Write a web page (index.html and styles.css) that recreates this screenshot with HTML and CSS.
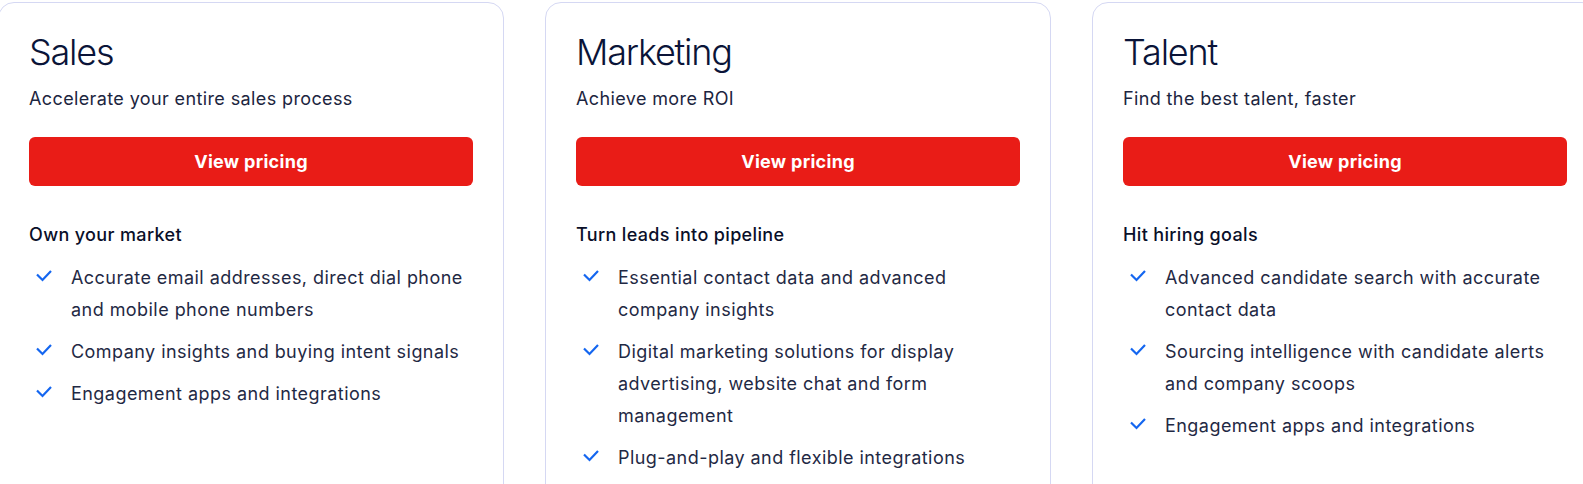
FILE: index.html
```html
<!DOCTYPE html>
<html lang="en">
<head>
<meta charset="utf-8">
<title>Plans</title>
<link rel="stylesheet" href="styles.css">
</head>
<body>
<div class="track">
  <section class="card">
    <h2 class="card-title">Sales</h2>
    <p class="card-sub">Accelerate your entire sales process</p>
    <a class="btn" href="#">View pricing</a>
    <h3 class="list-head">Own your market</h3>
    <ul class="features">
      <li><svg class="check" viewBox="0 0 16 12"><path d="M1 4.5 L6.5 10 L15 1"/></svg><span>Accurate email addresses, direct dial phone and mobile phone numbers</span></li>
      <li><svg class="check" viewBox="0 0 16 12"><path d="M1 4.5 L6.5 10 L15 1"/></svg><span>Company insights and buying intent signals</span></li>
      <li><svg class="check" viewBox="0 0 16 12"><path d="M1 4.5 L6.5 10 L15 1"/></svg><span>Engagement apps and integrations</span></li>
    </ul>
  </section>
  <section class="card">
    <h2 class="card-title">Marketing</h2>
    <p class="card-sub">Achieve more ROI</p>
    <a class="btn" href="#">View pricing</a>
    <h3 class="list-head">Turn leads into pipeline</h3>
    <ul class="features">
      <li><svg class="check" viewBox="0 0 16 12"><path d="M1 4.5 L6.5 10 L15 1"/></svg><span>Essential contact data and advanced company insights</span></li>
      <li><svg class="check" viewBox="0 0 16 12"><path d="M1 4.5 L6.5 10 L15 1"/></svg><span>Digital marketing solutions for display advertising, website chat and form management</span></li>
      <li><svg class="check" viewBox="0 0 16 12"><path d="M1 4.5 L6.5 10 L15 1"/></svg><span>Plug-and-play and flexible integrations</span></li>
    </ul>
  </section>
  <section class="card">
    <h2 class="card-title">Talent</h2>
    <p class="card-sub">Find the best talent, faster</p>
    <a class="btn" href="#">View pricing</a>
    <h3 class="list-head">Hit hiring goals</h3>
    <ul class="features">
      <li><svg class="check" viewBox="0 0 16 12"><path d="M1 4.5 L6.5 10 L15 1"/></svg><span>Advanced candidate search with accurate contact data</span></li>
      <li><svg class="check" viewBox="0 0 16 12"><path d="M1 4.5 L6.5 10 L15 1"/></svg><span>Sourcing intelligence with candidate alerts and company scoops</span></li>
      <li><svg class="check" viewBox="0 0 16 12"><path d="M1 4.5 L6.5 10 L15 1"/></svg><span>Engagement apps and integrations</span></li>
    </ul>
  </section>
</div>
</body>
</html>
```
FILE: styles.css
```css
html, body {
  margin: 0;
  padding: 0;
  background: #ffffff;
  overflow: hidden;
}
body {
  font-family: Inter, "Noto Sans", "Liberation Sans", sans-serif;
  color: #1c2540;
}
.track {
  display: flex;
  gap: 41px;
  margin-left: -2px;
  padding-top: 2px;
}
.card {
  flex: 0 0 506px;
  box-sizing: border-box;
  min-height: 560px;
  border: 1px solid #d5d8f3;
  border-radius: 16px;
  padding: 28px 30px 30px;
  background: #fff;
}
.card-title {
  margin: 0;
  font-size: 36px;
  line-height: 43px;
  font-weight: 300;
  color: #0a1438;
  letter-spacing: -1.2px;
}
.card-sub {
  margin: 11px 0 0;
  font-size: 18px;
  line-height: 28px;
  color: #1c2540;
  letter-spacing: 0.38px;
}
.btn {
  display: flex;
  align-items: center;
  justify-content: center;
  margin-top: 24px;
  height: 49px;
  border-radius: 6px;
  background: #e91c17;
  color: #fff;
  font-size: 18px;
  font-weight: 700;
  letter-spacing: 0.3px;
  text-decoration: none;
}
.list-head {
  margin: 35px 0 0;
  font-size: 18px;
  line-height: 28px;
  font-weight: 500;
  color: #0a0f29;
  letter-spacing: 0.35px;
}
.features {
  list-style: none;
  margin: 13px 0 0;
  padding: 0;
  display: flex;
  flex-direction: column;
  gap: 10px;
}
.features li {
  display: flex;
  align-items: flex-start;
  font-size: 18px;
  line-height: 32px;
  color: #1f2944;
  letter-spacing: 0.45px;
}
.check {
  flex: 0 0 16px;
  width: 16px;
  height: 12px;
  margin: 8px 19px 0 7px;
  fill: none;
  stroke: #1466f0;
  stroke-width: 2.2;
}
```
